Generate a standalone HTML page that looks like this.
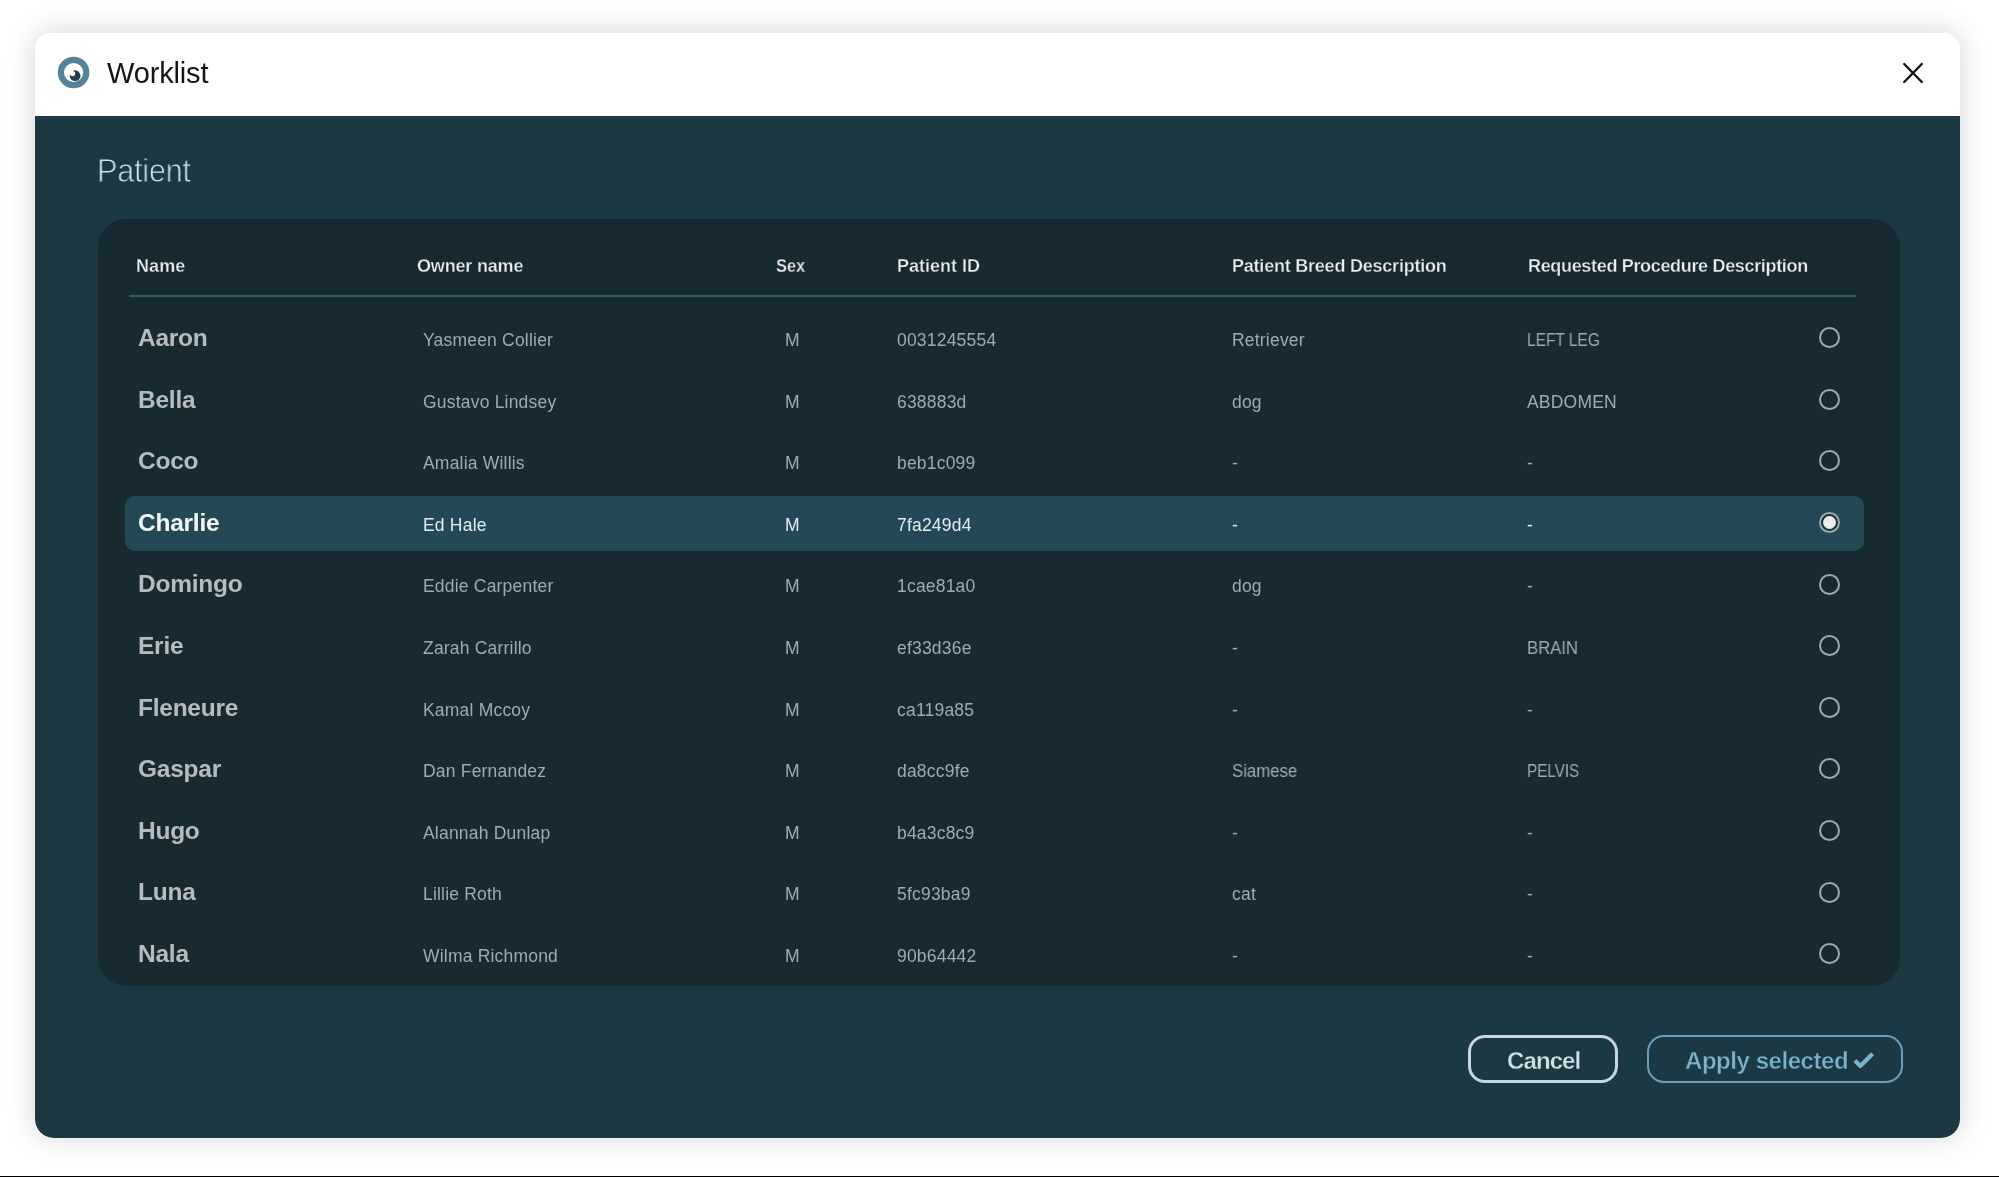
<!DOCTYPE html>
<html><head><meta charset="utf-8">
<style>
*{margin:0;padding:0;box-sizing:border-box}
html,body{width:1999px;height:1177px;overflow:hidden;background:#fff;font-family:"Liberation Sans",sans-serif}
.abs{position:absolute}
#shadow{position:absolute;left:35px;top:33px;width:1925px;height:1105px;border-radius:16px;box-shadow:0 -1px 30px rgba(0,0,0,0.17)}
#hdr{position:absolute;left:35px;top:33px;width:1923px;height:83px;background:#fff;border-radius:15px 15px 0 0}
#body{position:absolute;left:35px;top:116px;width:1925px;height:1022px;background:#1c3943;border-radius:0 0 19px 19px}
#bottomline{position:absolute;left:0;top:1176px;width:1999px;height:1px;background:#000}
.t{position:absolute;white-space:nowrap;line-height:1;will-change:transform}
#card{position:absolute;left:98px;top:219px;width:1802px;height:767px;background:#182a31;border-radius:28px}
#hline{position:absolute;left:129px;top:294.5px;width:1727px;height:2px;background:#3a5865}
.sel{position:absolute;left:125px;top:496px;width:1739px;height:55px;background:#244856;border-radius:10px}
.th{font-weight:700;color:#e9eef1;-webkit-text-stroke:0.3px #182a31}
.nm{font-weight:700;color:#b5bcc0;letter-spacing:-0.25px}
.c{color:#9eabb1;letter-spacing:0.2px}
.nms{font-weight:700;color:#f4f7f8;letter-spacing:-0.25px}
.cs{color:#e6ecef;letter-spacing:0.2px}
.radio{position:absolute;width:21px;height:21px;border:2px solid #98abb3;border-radius:50%}
.btn{position:absolute;top:1035px;height:48px;border-radius:17px}
</style></head><body>
<div id="shadow"></div>
<div id="hdr"></div>
<div id="body"></div>
<div id="bottomline"></div>
<svg class="abs" style="left:55px;top:54px" width="38" height="38" viewBox="0 0 38 38">
  <circle cx="18.6" cy="18.5" r="12.7" fill="none" stroke="#54839a" stroke-width="6.2"/>
  <circle cx="20.1" cy="21.7" r="5.4" fill="#263d4a"/>
  <circle cx="17.6" cy="19.6" r="2.6" fill="#fff"/>
</svg>
<div class="t " style="left:107px;top:58.85px;font-size:29px;color:#151515;letter-spacing:-0.15px">Worklist</div>
<svg class="abs" style="left:1894px;top:54px" width="38" height="38" viewBox="0 0 38 38">
  <path d="M10.2 10 L27.8 28 M27.8 10 L10.2 28" stroke="#111" stroke-width="2.3" stroke-linecap="round"/>
</svg>
<div class="t " style="left:96.5px;top:154.27px;font-size:33px;color:#d6e4ea;letter-spacing:-0.3px;-webkit-text-stroke:0.9px #1c3943;transform:scaleX(0.93);transform-origin:0 0">Patient</div>
<div id="card"></div>
<div id="hline"></div>
<div class="sel"></div>
<div class="t th" style="left:136px;top:257.16px;font-size:18px;letter-spacing:0.1px">Name</div>
<div class="t th" style="left:417px;top:257.16px;font-size:18px;letter-spacing:-0.18px">Owner name</div>
<div class="t th" style="left:776px;top:257.16px;font-size:18px;letter-spacing:0px;transform:scaleX(0.91);transform-origin:0 0">Sex</div>
<div class="t th" style="left:897px;top:257.16px;font-size:18px;letter-spacing:0px">Patient ID</div>
<div class="t th" style="left:1232px;top:257.16px;font-size:18px;letter-spacing:-0.22px">Patient Breed Description</div>
<div class="t th" style="left:1528px;top:257.16px;font-size:18px;letter-spacing:-0.33px">Requested Procedure Description</div>
<div class="t nm" style="left:137.5px;top:326px;font-size:24.5px;">Aaron</div>
<div class="t c" style="left:423px;top:332px;font-size:17.5px;">Yasmeen Collier</div>
<div class="t c" style="left:785px;top:332px;font-size:17.5px;">M</div>
<div class="t c" style="left:897px;top:332px;font-size:17.5px;">0031245554</div>
<div class="t c" style="left:1232px;top:332px;font-size:17.5px;">Retriever</div>
<div class="t c" style="left:1527px;top:332px;font-size:17.5px;letter-spacing:0;transform:scaleX(0.885);transform-origin:0 0">LEFT LEG</div>
<div class="radio" style="left:1818.5px;top:327.20px;"></div>
<div class="t nm" style="left:137.5px;top:388px;font-size:24.5px;">Bella</div>
<div class="t c" style="left:423px;top:394px;font-size:17.5px;">Gustavo Lindsey</div>
<div class="t c" style="left:785px;top:394px;font-size:17.5px;">M</div>
<div class="t c" style="left:897px;top:394px;font-size:17.5px;">638883d</div>
<div class="t c" style="left:1232px;top:394px;font-size:17.5px;">dog</div>
<div class="t c" style="left:1527px;top:394px;font-size:17.5px;">ABDOMEN</div>
<div class="radio" style="left:1818.5px;top:388.80px;"></div>
<div class="t nm" style="left:137.5px;top:449px;font-size:24.5px;">Coco</div>
<div class="t c" style="left:423px;top:455px;font-size:17.5px;">Amalia Willis</div>
<div class="t c" style="left:785px;top:455px;font-size:17.5px;">M</div>
<div class="t c" style="left:897px;top:455px;font-size:17.5px;">beb1c099</div>
<div class="t c" style="left:1232px;top:455px;font-size:17.5px;">-</div>
<div class="t c" style="left:1527px;top:455px;font-size:17.5px;">-</div>
<div class="radio" style="left:1818.5px;top:450.40px;"></div>
<div class="t nms" style="left:137.5px;top:511px;font-size:24.5px;">Charlie</div>
<div class="t cs" style="left:423px;top:517px;font-size:17.5px;">Ed Hale</div>
<div class="t cs" style="left:785px;top:517px;font-size:17.5px;">M</div>
<div class="t cs" style="left:897px;top:517px;font-size:17.5px;">7fa249d4</div>
<div class="t cs" style="left:1232px;top:517px;font-size:17.5px;">-</div>
<div class="t cs" style="left:1527px;top:517px;font-size:17.5px;">-</div>
<div class="radio" style="left:1818.5px;top:512.00px;background:#1b2f38"></div>
<div class="abs" style="left:1822.5px;top:516.00px;width:13px;height:13px;border-radius:50%;background:#e8ecee"></div>
<div class="t nm" style="left:137.5px;top:572px;font-size:24.5px;">Domingo</div>
<div class="t c" style="left:423px;top:578px;font-size:17.5px;">Eddie Carpenter</div>
<div class="t c" style="left:785px;top:578px;font-size:17.5px;">M</div>
<div class="t c" style="left:897px;top:578px;font-size:17.5px;">1cae81a0</div>
<div class="t c" style="left:1232px;top:578px;font-size:17.5px;">dog</div>
<div class="t c" style="left:1527px;top:578px;font-size:17.5px;">-</div>
<div class="radio" style="left:1818.5px;top:573.60px;"></div>
<div class="t nm" style="left:137.5px;top:634px;font-size:24.5px;">Erie</div>
<div class="t c" style="left:423px;top:640px;font-size:17.5px;">Zarah Carrillo</div>
<div class="t c" style="left:785px;top:640px;font-size:17.5px;">M</div>
<div class="t c" style="left:897px;top:640px;font-size:17.5px;">ef33d36e</div>
<div class="t c" style="left:1232px;top:640px;font-size:17.5px;">-</div>
<div class="t c" style="left:1527px;top:640px;font-size:17.5px;letter-spacing:0;transform:scaleX(0.955);transform-origin:0 0">BRAIN</div>
<div class="radio" style="left:1818.5px;top:635.20px;"></div>
<div class="t nm" style="left:137.5px;top:696px;font-size:24.5px;">Fleneure</div>
<div class="t c" style="left:423px;top:702px;font-size:17.5px;">Kamal Mccoy</div>
<div class="t c" style="left:785px;top:702px;font-size:17.5px;">M</div>
<div class="t c" style="left:897px;top:702px;font-size:17.5px;">ca119a85</div>
<div class="t c" style="left:1232px;top:702px;font-size:17.5px;">-</div>
<div class="t c" style="left:1527px;top:702px;font-size:17.5px;">-</div>
<div class="radio" style="left:1818.5px;top:696.80px;"></div>
<div class="t nm" style="left:137.5px;top:757px;font-size:24.5px;">Gaspar</div>
<div class="t c" style="left:423px;top:763px;font-size:17.5px;">Dan Fernandez</div>
<div class="t c" style="left:785px;top:763px;font-size:17.5px;">M</div>
<div class="t c" style="left:897px;top:763px;font-size:17.5px;">da8cc9fe</div>
<div class="t c" style="left:1232px;top:763px;font-size:17.5px;letter-spacing:0;transform:scaleX(0.96);transform-origin:0 0">Siamese</div>
<div class="t c" style="left:1527px;top:763px;font-size:17.5px;letter-spacing:0;transform:scaleX(0.87);transform-origin:0 0">PELVIS</div>
<div class="radio" style="left:1818.5px;top:758.40px;"></div>
<div class="t nm" style="left:137.5px;top:819px;font-size:24.5px;">Hugo</div>
<div class="t c" style="left:423px;top:825px;font-size:17.5px;">Alannah Dunlap</div>
<div class="t c" style="left:785px;top:825px;font-size:17.5px;">M</div>
<div class="t c" style="left:897px;top:825px;font-size:17.5px;">b4a3c8c9</div>
<div class="t c" style="left:1232px;top:825px;font-size:17.5px;">-</div>
<div class="t c" style="left:1527px;top:825px;font-size:17.5px;">-</div>
<div class="radio" style="left:1818.5px;top:820.00px;"></div>
<div class="t nm" style="left:137.5px;top:880px;font-size:24.5px;">Luna</div>
<div class="t c" style="left:423px;top:886px;font-size:17.5px;">Lillie Roth</div>
<div class="t c" style="left:785px;top:886px;font-size:17.5px;">M</div>
<div class="t c" style="left:897px;top:886px;font-size:17.5px;">5fc93ba9</div>
<div class="t c" style="left:1232px;top:886px;font-size:17.5px;">cat</div>
<div class="t c" style="left:1527px;top:886px;font-size:17.5px;">-</div>
<div class="radio" style="left:1818.5px;top:881.60px;"></div>
<div class="t nm" style="left:137.5px;top:942px;font-size:24.5px;">Nala</div>
<div class="t c" style="left:423px;top:948px;font-size:17.5px;">Wilma Richmond</div>
<div class="t c" style="left:785px;top:948px;font-size:17.5px;">M</div>
<div class="t c" style="left:897px;top:948px;font-size:17.5px;">90b64442</div>
<div class="t c" style="left:1232px;top:948px;font-size:17.5px;">-</div>
<div class="t c" style="left:1527px;top:948px;font-size:17.5px;">-</div>
<div class="radio" style="left:1818.5px;top:943.20px;"></div>
<div class="btn" style="left:1468px;width:150px;border:3px solid #c9d5dc"></div>
<div class="t " style="left:1507px;top:1049.38px;font-size:24px;font-weight:700;color:#d3dee4;letter-spacing:-0.9px;-webkit-text-stroke:0.3px #1c3943">Cancel</div>
<div class="btn" style="left:1647px;width:256px;border:2px solid #6b9fb8"></div>
<div class="t " style="left:1685px;top:1048.68px;font-size:24px;font-weight:700;color:#7ab3ca;letter-spacing:-0.45px;-webkit-text-stroke:0.45px #1c3943">Apply selected</div>
<svg class="abs" style="left:1850px;top:1048px" width="28" height="24" viewBox="0 0 28 24">
  <path d="M4.9 12.4 L10.4 17.9 L22.6 5.7" fill="none" stroke="#7ab3ca" stroke-width="4.2" stroke-linecap="butt" stroke-linejoin="round"/>
</svg>
</body></html>
